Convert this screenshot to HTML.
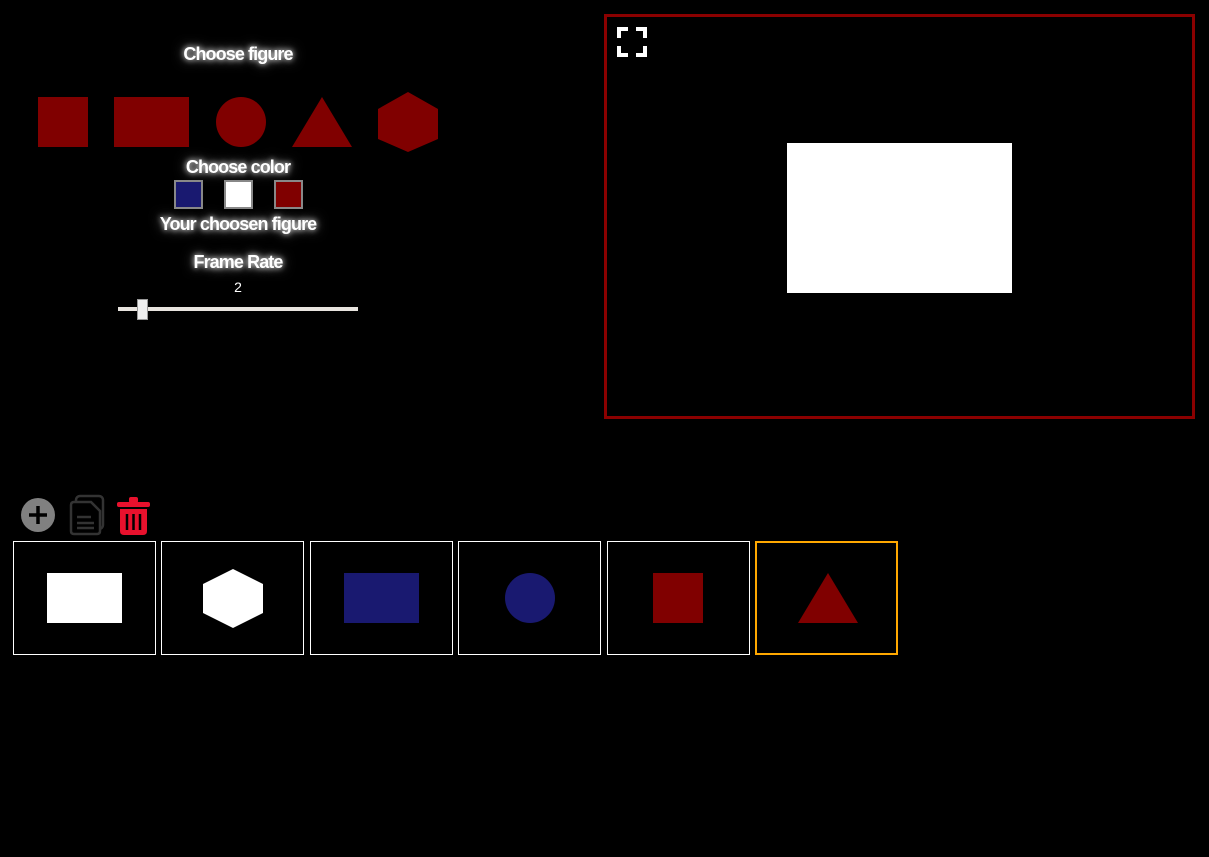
<!DOCTYPE html>
<html><head><style>
body{margin:0;background:#000;width:1209px;height:857px;overflow:hidden;position:relative;font-family:"Liberation Sans",sans-serif}
.t{position:absolute;left:0;width:476px;text-align:center;color:#fff;font-weight:bold;font-size:18px;letter-spacing:-0.9px;text-shadow:0 0 6px #fff,0 0 12px rgba(255,255,255,.6)}
.a{position:absolute}
.sw{position:absolute;top:180px;width:25px;height:25px;border:2px solid #888}
.th{position:absolute;top:541px;width:141px;height:112px;border:1px solid #fff}
</style></head><body>
<div class="t" style="top:44px">Choose figure</div>
<div class="a" style="left:38px;top:97px;width:50px;height:50px;background:#800000"></div>
<div class="a" style="left:114px;top:97px;width:75px;height:50px;background:#800000"></div>
<div class="a" style="left:216px;top:97px;width:50px;height:50px;border-radius:50%;background:#800000"></div>
<svg class="a" style="left:0;top:0" width="476" height="160"><polygon points="322,97 352,147 292,147" fill="#800000"/><polygon points="408,92 438,109 438,139 408,152 378,139 378,109" fill="#800000"/></svg>
<div class="t" style="top:157px">Choose color</div>
<div class="sw" style="left:174px;background:#191970"></div>
<div class="sw" style="left:224px;background:#fff"></div>
<div class="sw" style="left:274px;background:#800000"></div>
<div class="t" style="top:214px">Your choosen figure</div>
<div class="t" style="top:252px">Frame Rate</div>
<div class="a" style="left:0;width:476px;top:279px;text-align:center;color:#fff;font-size:14px">2</div>
<div class="a" style="left:118px;top:307px;width:240px;height:4px;background:#e8e4df"></div>
<div class="a" style="left:137px;top:299px;width:9px;height:19px;background:#eee;border:1px solid #999"></div>
<div class="a" style="left:604px;top:14px;width:585px;height:399px;border:3px solid #8b0000"></div>
<svg class="a" style="left:617px;top:27px" width="30" height="30"><path d="M2 11V2H11M19 2H28V11M28 19V28H19M11 28H2V19" fill="none" stroke="#fff" stroke-width="4"/></svg>
<div class="a" style="left:787px;top:143px;width:225px;height:150px;background:#fff"></div>
<svg class="a" style="left:18px;top:493px" width="140" height="46">
<circle cx="20" cy="22" r="17" fill="#808080"/><path d="M20 13V31M11 22H29" stroke="#000" stroke-width="3.5"/>
<rect x="58" y="3" width="27" height="33" rx="4" fill="none" stroke="#333" stroke-width="2.5"/>
<path d="M56 9H73L82 18V38Q82 41 79 41H56Q53 41 53 38V12Q53 9 56 9Z" fill="#000" stroke="#333" stroke-width="2.5"/>
<path d="M59 24H73M59 30H76M59 35H76" stroke="#333" stroke-width="2.5"/>
<rect x="99" y="9" width="33" height="5" rx="2" fill="#e8112d"/><rect x="111" y="4" width="9" height="6" rx="2" fill="#e8112d"/>
<path d="M102 16H129V38Q129 42 125 42H106Q102 42 102 38Z" fill="#e8112d"/>
<path d="M109 21V37M115.5 21V37M122 21V37" stroke="#000" stroke-width="2.5"/>
</svg>
<div class="th" style="left:13px"><div class="a" style="left:33px;top:31px;width:75px;height:50px;background:#fff"></div></div>
<div class="th" style="left:161px"><svg class="a" style="left:40px;top:25px" width="62" height="62"><polygon points="31,2 61,17 61,46 31,61 1,46 1,17" fill="#fff"/></svg></div>
<div class="th" style="left:310px"><div class="a" style="left:33px;top:31px;width:75px;height:50px;background:#191970"></div></div>
<div class="th" style="left:458px"><div class="a" style="left:46px;top:31px;width:50px;height:50px;border-radius:50%;background:#191970"></div></div>
<div class="th" style="left:607px"><div class="a" style="left:45px;top:31px;width:50px;height:50px;background:#800000"></div></div>
<div class="th" style="left:755px;width:139px;height:110px;border:2px solid #ffa800"><svg class="a" style="left:40px;top:30px" width="62" height="52"><polygon points="31,0 61,50 1,50" fill="#800000"/></svg></div>
</body></html>
